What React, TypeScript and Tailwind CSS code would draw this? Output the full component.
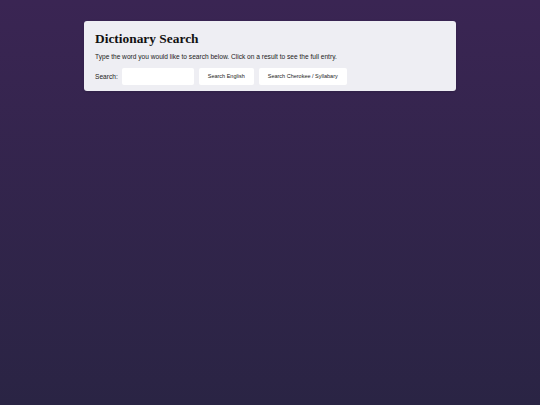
export default function App() {
  return (
    <div className="min-h-[405px] w-full bg-gradient-to-b from-[#3a2553] to-[#2a2444] pt-[21px] font-['Liberation_Sans',Arial,sans-serif]">
      <div className="mx-auto w-[372px] rounded-[3px] bg-[#eeeef3] px-[11px] pb-[6px] pt-[10px] shadow-sm">
        <h1 className="font-['Liberation_Serif','Times_New_Roman',serif] text-[13.4px] font-bold leading-[16px] text-[#111]">
          Dictionary Search
        </h1>
        <p className="mt-[5px] text-[6.6px] leading-[9px] text-[#222]">
          Type the word you would like to search below. Click on a result to see the full entry.
        </p>
        <div className="mt-[7px] flex items-center gap-[5px]">
          <label className="mr-[-1px] text-[6.6px] text-[#222]">Search:</label>
          <input
            type="text"
            className="h-[17px] w-[72px] rounded-[2px] bg-white px-1 text-[7px] outline-none"
          />
          <button className="h-[17px] w-[55px] rounded-[2px] bg-white text-[5.5px] text-[#222]">
            Search English
          </button>
          <button className="h-[17px] w-[88px] rounded-[2px] bg-white text-[5.5px] text-[#222]">
            Search Cherokee / Syllabary
          </button>
        </div>
      </div>
    </div>
  );
}
